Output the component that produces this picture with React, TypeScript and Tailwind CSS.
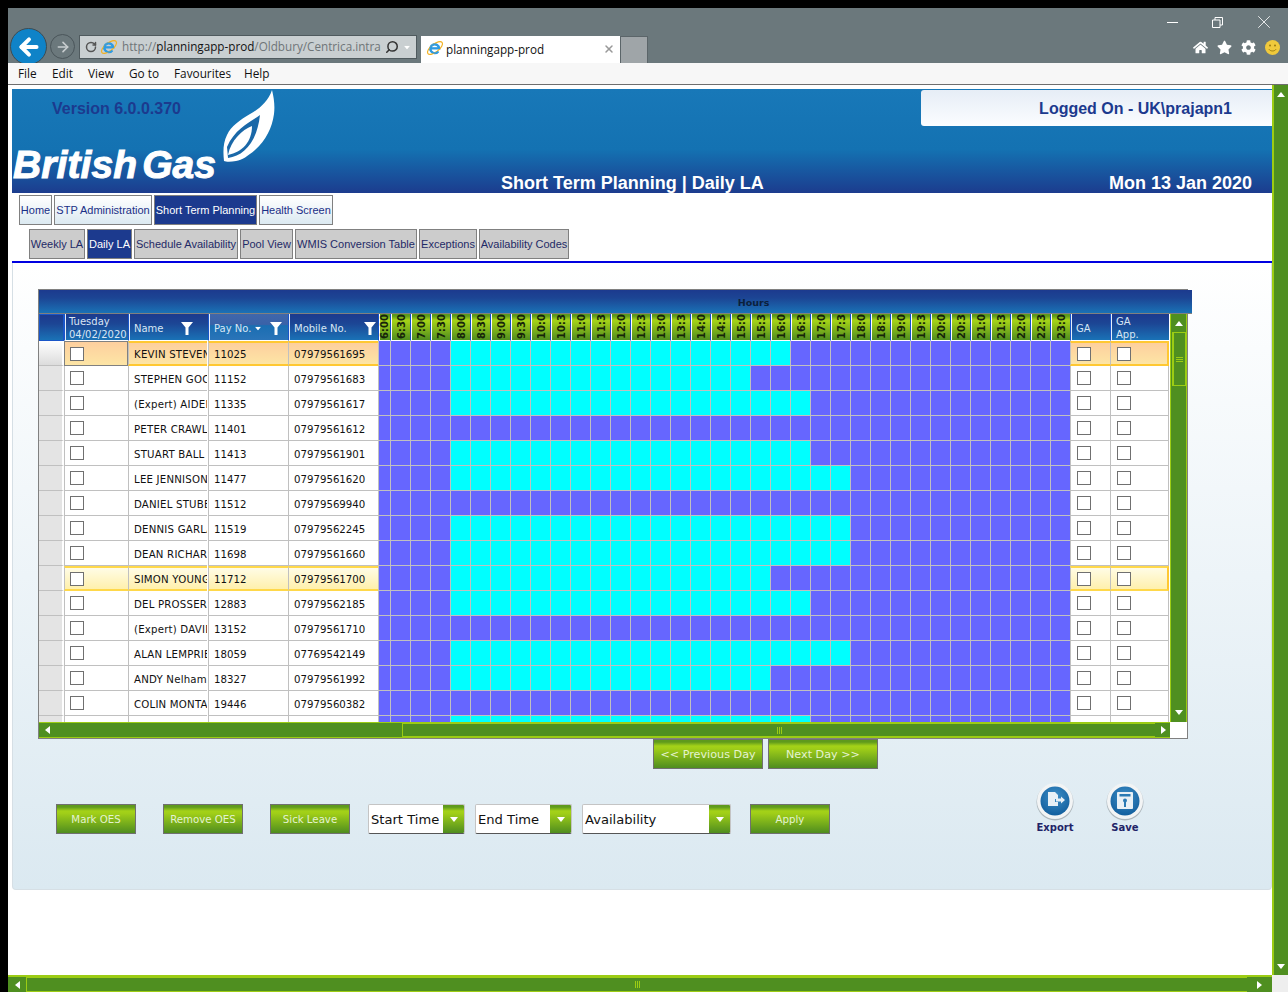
import React from "react";
import { ArrowLeft, ArrowRight, RotateCw, Search, X } from "lucide-react";
import { FaHome, FaStar, FaCog } from "react-icons/fa";

const GREEN = "bg-[linear-gradient(#5f9a1c_0,#5f9a1c_2px,#a4d218_6px,#a0ce18_30%,#4f8d1f_100%)]";
const BLUE_HEAD = "bg-[linear-gradient(#1c3a8e_0,#1c4594_35%,#1a72b6_100%)]";

const rows: [string, string, string, number][] = [
  ["KEVIN STEVENS", "11025", "07979561695", 790],
  ["STEPHEN GOCH", "11152", "07979561683", 750],
  ["(Expert) AIDEN HALL", "11335", "07979561617", 810],
  ["PETER CRAWLEY", "11401", "07979561612", 0],
  ["STUART BALL", "11413", "07979561901", 810],
  ["LEE JENNISON", "11477", "07979561620", 850],
  ["DANIEL STUBBS", "11512", "07979569940", 0],
  ["DENNIS GARLAND", "11519", "07979562245", 850],
  ["DEAN RICHARDS", "11698", "07979561660", 850],
  ["SIMON YOUNG", "11712", "07979561700", 770],
  ["DEL PROSSER", "12883", "07979562185", 810],
  ["(Expert) DAVID HILL", "13152", "07979561710", 0],
  ["ALAN LEMPRIERE", "18059", "07769542149", 850],
  ["ANDY Nelhams", "18327", "07979561992", 770],
  ["COLIN MONTAGUE", "19446", "07979560382", 0],
  ["", "", "", 810],
];

const hours: string[] = [];
for (let h = 6; h <= 23; h++) {
  hours.push(`${h}:00`);
  if (h < 23) hours.push(`${h}:30`);
}

const COLS = "grid grid-cols-[25px_64px_80px_80px_90px_12px_repeat(34,20px)_40px_59px]";

function Tri({ dir, className = "" }: { dir: "up" | "down" | "left" | "right"; className?: string }) {
  const pts = { up: "0,5 4,0 8,5", down: "0,0 8,0 4,5", left: "5,0 5,8 0,4", right: "0,0 0,8 5,4" }[dir];
  const w = dir === "up" || dir === "down" ? 8 : 5;
  const h = dir === "up" || dir === "down" ? 5 : 8;
  return (
    <svg width={w} height={h} viewBox={`0 0 ${w} ${h}`} className={className}>
      <polygon points={pts} fill="#fff" />
    </svg>
  );
}

function IE({ size = 18 }: { size?: number }) {
  return (
    <svg width={size} height={size} viewBox="0 0 20 20" className="shrink-0">
      <path d="M5.2 10.4H14.6A4.9 4.9 0 1 0 13.6 13.8" fill="none" stroke="#2f9be2" strokeWidth="2.7" />
      <ellipse cx="10" cy="10" rx="10" ry="4.4" transform="rotate(-38 10 10)" fill="none" stroke="#f2b01e" strokeWidth="1.3" />
      <path d="M5.2 10.4H14.6A4.9 4.9 0 1 0 13.6 13.8" fill="none" stroke="#2f9be2" strokeWidth="1.6" />
    </svg>
  );
}

function Funnel() {
  return (
    <svg width="12" height="13" viewBox="0 0 12 13" className="shrink-0">
      <polygon points="0,0 12,0 7.5,5.5 7.5,13 4.5,13 4.5,5.5" fill="#fff" />
    </svg>
  );
}

function Check() {
  return <span className="block w-[14px] h-[14px] border border-[#707070] bg-white shrink-0" />;
}

function GreenBtn({ label, w, size = "text-[10.2px]" }: { label: string; w: string; size?: string }) {
  return (
    <div className={`${w} ${size} ${GREEN} h-[30px] shrink-0 border border-[#707070] pt-[2px] flex items-center justify-center text-[#e4f3d0] font-['DejaVu_Sans',sans-serif]`}>
      {label}
    </div>
  );
}

function Combo({ label, w }: { label: string; w: string }) {
  return (
    <div className={`${w} h-[30px] shrink-0 flex rounded-[2px] border border-[#c4c4c4] border-b-[#555] overflow-hidden bg-white`}>
      <div className="flex-1 pl-[2px] pt-[2px] flex items-center text-[13.1px] text-[#111] font-['DejaVu_Sans',sans-serif] whitespace-nowrap">{label}</div>
      <div className={`w-[21px] ${GREEN} flex items-center justify-center`}>
        <Tri dir="down" />
      </div>
    </div>
  );
}

function RoundIcon({ label, kind }: { label: string; kind: "export" | "save" }) {
  return (
    <div className="flex flex-col items-center w-[70px] -mt-[1px]">
      <svg width="40" height="40" viewBox="0 0 40 40">
        <defs>
          <radialGradient id={`g${kind}`} cx="50%" cy="35%" r="65%">
            <stop offset="0" stopColor="#3f90c8" />
            <stop offset="1" stopColor="#135f9e" />
          </radialGradient>
        </defs>
        <circle cx="20" cy="21" r="18.5" fill="#8b9297" opacity="0.6" />
        <circle cx="20" cy="20" r="18" fill="#f2f4f5" />
        <circle cx="20" cy="20" r="14.5" fill={`url(#g${kind})`} />
        {kind === "export" ? (
          <>
            <path d="M13 11h7l3 3v4h-3v3h3v4H13z" fill="#e8f0f6" />
            <path d="M21 17.5h5v-2l4 3.5-4 3.5v-2h-5z" fill="#e8f0f6" />
          </>
        ) : (
          <>
            <rect x="12" y="11" width="16" height="17" rx="1" fill="#e8f0f6" />
            <rect x="14.5" y="13" width="11" height="2.5" fill="#2a7ab4" />
            <circle cx="20" cy="19.5" r="2" fill="#2a7ab4" />
            <rect x="19" y="20" width="2" height="6" fill="#2a7ab4" />
          </>
        )}
      </svg>
      <span className="text-[10px] font-bold leading-[13px] text-[#1f2468] font-['DejaVu_Sans',sans-serif]">{label}</span>
    </div>
  );
}

function Chrome() {
  const font = "font-['Open_Sans',sans-serif]";
  return (
    <div className="h-[55px] bg-[#6b787c] flex overflow-hidden">
      <div className="flex items-start pt-[20px] pl-[2px]">
        <div className="w-[37px] h-[37px] rounded-full bg-[#0f83c8] border border-[#3f4b50] flex items-center justify-center shrink-0">
          <ArrowLeft size={26} strokeWidth={3.6} color="#fff" />
        </div>
        <div className="ml-[3px] mt-[6px] w-[25px] h-[25px] rounded-full border border-[#4a555a] flex items-center justify-center shrink-0">
          <ArrowRight size={16} strokeWidth={2.4} color="#c8cdcf" />
        </div>
        <div className="ml-[4px] mt-[7px] w-[338px] h-[24px] bg-[#c9cfd1] border border-[#4f5a5e] flex items-center pl-[5px] pr-[4px] shrink-0">
          <RotateCw size={12} strokeWidth={3} color="#555" className="shrink-0" />
          <span className="ml-[3px]"><IE size={18} /></span>
          <span className={`ml-[4px] w-[259px] shrink-0 overflow-hidden whitespace-nowrap text-[11.7px] text-[#6f7578] ${font}`}>
            http://<span className="text-[#111]">planningapp-prod</span>/Oldbury/Centrica.intranet/default.aspx
          </span>
          <Search size={14} strokeWidth={2.6} color="#333" className="-scale-x-100 ml-[4px] shrink-0" />
          <Tri dir="down" className="ml-[4px] scale-75" />
        </div>
        <div className="ml-[4px] mt-[8px] w-[199px] h-[35px] bg-white flex items-start pt-[3px] pl-[5px] shrink-0">
          <IE size={18} />
          <span className={`ml-[2px] text-[11.7px] leading-[20px] text-[#111] ${font}`}>planningapp-prod</span>
          <X size={12} strokeWidth={3} color="#999" className="ml-auto mr-[5px] mt-[4px]" />
        </div>
        <div className="mt-[8px] w-[28px] h-[35px] bg-[#9fa5a8] border border-[#5b6569] shrink-0" />
      </div>
      <div className="ml-auto w-[130px] shrink-0 flex flex-col items-end pr-[8px] pt-[8px]">
        <div className="flex items-center h-[12px] pr-[5px]">
          <span className="block w-[11px] h-px bg-white" />
          <svg width="11" height="11" viewBox="0 0 11 11" className="ml-[34px]">
            <path d="M.5 3h7.5v7.5H.5z M3 3V.5h7.5V8H8" fill="none" stroke="#fff" />
          </svg>
          <X size={22} strokeWidth={0.9} color="#fff" className="ml-[30px]" />
        </div>
        <div className="flex items-center gap-[9px] mt-[12px]">
          <FaHome size={15} color="#fff" />
          <FaStar size={15} color="#fff" />
          <FaCog size={15} color="#fff" />
          <svg width="15" height="15" viewBox="0 0 15 15">
            <circle cx="7.5" cy="7.5" r="7.5" fill="#f0c93c" />
            <circle cx="5" cy="5.5" r="1" fill="#9a7a10" />
            <circle cx="10" cy="5.5" r="1" fill="#9a7a10" />
            <path d="M4 9.3c1.5 2.2 5.5 2.2 7 0" fill="none" stroke="#9a7a10" strokeWidth="1" />
          </svg>
        </div>
      </div>
    </div>
  );
}

function Menu() {
  const items: [string, string][] = [
    ["File", "w-[34px]"],
    ["Edit", "w-[36px]"],
    ["View", "w-[41px]"],
    ["Go to", "w-[45px]"],
    ["Favourites", "w-[70px]"],
    ["Help", "w-[40px]"],
  ];
  return (
    <div className="h-[22px] bg-[#f7f7f7] border-b border-[#6e6e6e] flex items-center pl-[10px] pt-[1px] text-[11.8px] text-[#111] font-['Open_Sans',sans-serif]">
      {items.map(([t, w]) => (
        <span key={t} className={w}>{t}</span>
      ))}
    </div>
  );
}

function Header() {
  return (
    <div className="h-[104px] flex bg-[linear-gradient(#1878b8_0,#1472b2_58%,#1c3c8e_100%)] font-['Liberation_Sans',sans-serif]">
      <div className="w-[210px] shrink-0 overflow-visible">
        <div className="pl-[40px] pt-[11px] text-[16px] leading-[18px] font-bold text-[#1c3a8e]">Version 6.0.0.370</div>
        <div className="mt-[27px] pl-[1px] text-[39px] leading-[40px] font-bold italic text-white tracking-[0.1px] [word-spacing:-6px] [-webkit-text-stroke:1px_#fff] whitespace-nowrap">British Gas</div>
      </div>
      <svg width="53" height="73" viewBox="0 0 53 73" className="shrink-0 mt-[1px]">
        <path d="M50 0C52 8 53 16 52 24 50 38 44 50 33 60 26 66 20 70 14 71 9 72 4 72 2 71 1 62 1 53 5 45 9 36 18 30 28 24 37 19 46 12 50 0Z" fill="#fff" />
        <path d="M38 25C30 31 13 38 5 57L6 68C22 66 35 52 38 25Z" fill="#1a68a8" />
        <path d="M30 36C20 40 9 50 6 65 20 62 30 52 30 36Z" fill="#fff" />
      </svg>
      <div className="flex-1 flex flex-col justify-between">
        <div className="self-end mt-[1px] pt-[1px] w-[351px] h-[36px] rounded-l-[3px] bg-[linear-gradient(#e6edf6,#fbfdff)] flex items-center justify-end pr-[40px] text-[16px] font-bold text-[#1c3a8e]">
          {"Logged On - UK\\prajapn1"}
        </div>
        <div className="flex justify-between pl-[226px] pr-[20px] text-[18px] leading-[20px] font-bold text-white">
          <span>Short Term Planning | Daily LA</span>
          <span>Mon 13 Jan 2020</span>
        </div>
      </div>
    </div>
  );
}

function Tabs() {
  const top: [string, string, boolean][] = [
    ["Home", "w-[33px]", false],
    ["STP Administration", "w-[98px]", false],
    ["Short Term Planning", "w-[103px]", true],
    ["Health Screen", "w-[74px]", false],
  ];
  const sub: [string, string, boolean][] = [
    ["Weekly LA", "w-[56px]", false],
    ["Daily LA", "w-[45px]", true],
    ["Schedule Availability", "w-[104px]", false],
    ["Pool View", "w-[53px]", false],
    ["WMIS Conversion Table", "w-[122px]", false],
    ["Exceptions", "w-[58px]", false],
    ["Availability Codes", "w-[90px]", false],
  ];
  const base = "h-[30px] shrink-0 border border-[#808080] flex items-center justify-center whitespace-nowrap text-[11px] font-['Liberation_Sans',sans-serif]";
  return (
    <>
      <div className="mt-[2px] pl-[7px] flex gap-[2px]">
        {top.map(([t, w, a]) => (
          <div key={t} className={`${base} ${w} ${a ? "bg-[#1c3a8e] text-white" : "bg-[linear-gradient(#fff,#dbe9f1)] text-[#1a2f86]"}`}>{t}</div>
        ))}
      </div>
      <div className="mt-[4px] pl-[17px] flex gap-[2px]">
        {sub.map(([t, w, a]) => (
          <div key={t} className={`${base} ${w} ${a ? "bg-[#1c3a8e] text-white" : "bg-[#cccccc] text-[#1f2a66]"}`}>{t}</div>
        ))}
      </div>
      <div className="mt-[2px] h-[2px] bg-[#0000e0]" />
    </>
  );
}

function HeadCell({ children, className = "" }: { children?: React.ReactNode; className?: string }) {
  return (
    <div className={`h-[27px] border-l border-b border-l-[#1a56c8] border-b-white shadow-[inset_1px_0_0_#e6eefa] overflow-hidden flex items-center pt-[2px] text-[#d8e6f4] ${BLUE_HEAD} ${className}`}>
      {children}
    </div>
  );
}

function HeaderRow() {
  return (
    <div className={`${COLS} text-[10px] font-['DejaVu_Sans',sans-serif]`}>
      <div className={`h-[27px] border border-[#1a56c8] ${BLUE_HEAD}`} />
      <HeadCell className="leading-[13px] pl-[4px]"><span className="whitespace-nowrap">Tuesday<br />04/02/2020</span></HeadCell>
      <HeadCell className="pl-[5px]"><span className="flex-1">Name</span><span className="pr-[15px]"><Funnel /></span></HeadCell>
      <HeadCell className="pl-[5px] bg-[linear-gradient(#3f67ab_0,#3a62a8_40%,#1a6eb2_45%,#2a74b8_100%)]">
        <span>Pay No.</span><Tri dir="down" className="ml-[3px] scale-75" /><span className="ml-auto pr-[6px]"><Funnel /></span>
      </HeadCell>
      <HeadCell className="pl-[5px]"><span className="flex-1 whitespace-nowrap">Mobile No.</span><span className="pr-[2px]"><Funnel /></span></HeadCell>
      {hours.map((h, k) => (
        <div key={h} className={`h-[27px] border-l border-b border-l-[#1450c8] border-b-white shadow-[inset_1px_0_0_#fff] overflow-hidden flex justify-center items-start ${k === 0 ? "" : "pl-[3px]"} ${GREEN}`}>
          <span className="h-[26px] overflow-hidden pt-[1px] [writing-mode:vertical-rl] rotate-180 text-[10px] leading-[12px] font-bold text-[#16240a] whitespace-nowrap">{h}</span>
        </div>
      ))}
      <HeadCell className="pl-[5px]">GA</HeadCell>
      <HeadCell className="pl-[5px] leading-[13px]"><span>GA<br />App.</span></HeadCell>
    </div>
  );
}

function Row({ r, i }: { r: [string, string, string, number]; i: number }) {
  const sel = i === 0;
  const hov = i === 9;
  const hl = sel
    ? "bg-[linear-gradient(#fdcf9e,#fde5a5)] border-y-2 border-y-[#ffc832]"
    : hov
    ? "bg-[linear-gradient(#fffce6,#fff0ac)] border-y-2 border-y-[#ffd84a]"
    : "bg-white border-b border-[#c0c0c0]";
  const lined = "h-[25px]";
  return (
    <div className={`${COLS} text-[10.2px] text-[#111] font-['DejaVu_Sans',sans-serif]`}>
      <div className={`${lined} border-b border-[#c0c0c0] border-r-2 border-r-white ${sel ? "bg-[linear-gradient(#fff,#dcdcdc)]" : "bg-[#e4e4e4]"}`} />
      <div className={`${lined} ${sel ? "border border-[#808080] bg-[linear-gradient(#fdcf9e,#fde5a5)]" : hl + " border-l border-l-[#c0c0c0]"} flex items-center pl-[5px]`}>
        {r[2] && <Check />}
      </div>
      {[r[0], r[1], r[2]].map((t, k) => (
        <div key={k} className={`${lined} ${hl} border-l border-l-[#c0c0c0] flex items-center pl-[5px] overflow-hidden whitespace-nowrap ${sel || hov ? "pt-[2px]" : "pt-[4px]"} ${k === 0 ? "tracking-[0.2px] mr-px" : ""}`}>
          {t}
        </div>
      ))}
      {hours.map((_, k) => {
        const x = k === 0 ? 378 : 390 + (k - 1) * 20;
        const on = r[3] > 0 && x >= 450 && x < r[3];
        return <div key={k} className={`${lined} border-b border-b-[#c0c0c0] border-l border-l-[#c0c0c0] ${on ? "bg-[#00ffff]" : "bg-[#6666ff]"}`} />;
      })}
      <div className={`${lined} ${hl} border-l border-l-[#c0c0c0] flex items-center pl-[6px]`}>{r[2] && <Check />}</div>
      <div className={`${lined} ${hl} border-l border-l-[#c0c0c0] flex items-center pl-[6px] ${sel || hov ? "border-r-2 border-r-[#ffc832]" : "border-r border-r-[#c0c0c0]"}`}>{r[2] && <Check />}</div>
    </div>
  );
}

function PlanGrid() {
  return (
    <div className="ml-[25px] w-[1150px] h-[450px] border border-[#808080] bg-white flex flex-col">
      <div className={`w-[1153px] h-[24px] shrink-0 border-b border-[#808080] flex items-center justify-center pl-[276px] pt-[3px] text-[9.5px] font-bold text-[#0b1f3c] font-['DejaVu_Sans',sans-serif] ${BLUE_HEAD}`}>
        Hours
      </div>
      <div className="flex-1 flex min-h-0">
        <div className="w-[1131px] shrink-0 flex flex-col overflow-hidden">
          <HeaderRow />
          <div className="flex-1 overflow-hidden min-h-0">
            {rows.map((r, i) => (
              <Row key={i} r={r} i={i} />
            ))}
          </div>
          <div className="h-[16px] shrink-0 bg-[#4f8f20] border-y border-[#9ccc14] flex items-stretch">
            <div className="w-[363px] shrink-0 flex items-center pl-[6px]">
              <Tri dir="left" />
            </div>
            <div className="flex-1 border-l border-y border-[#9ccc14] flex items-center justify-center">
              <span className="w-[5px] h-[7px] border-x border-[#9ccc14] flex justify-center">
                <span className="block w-px h-full bg-[#9ccc14]" />
              </span>
            </div>
            <div className="w-[15px] shrink-0 flex items-center justify-end pr-[4px]">
              <Tri dir="right" />
            </div>
          </div>
        </div>
        <div className="flex-1 flex flex-col">
          <div className="h-[408px] bg-[#4f8f20] border-x border-[#9ccc14] flex flex-col items-center">
            <Tri dir="up" className="mt-[7px]" />
            <div className="mt-[6px] w-[14px] h-[54px] border border-[#9ccc14] border-l-2 flex flex-col items-center justify-center gap-[1px]">
              <span className="block w-[7px] h-px bg-[#9ccc14]" />
              <span className="block w-[7px] h-px bg-[#9ccc14]" />
              <span className="block w-[7px] h-px bg-[#9ccc14]" />
            </div>
            <Tri dir="down" className="mt-auto mb-[7px]" />
          </div>
        </div>
      </div>
    </div>
  );
}

function Panel() {
  return (
    <div className="h-[627px] pt-[26px] rounded-b-[4px] border-b border-x border-[#d6dfe5] bg-[linear-gradient(#ffffff,#dbe9f1)]">
      <PlanGrid />
      <div className="pl-[640px] flex gap-[5px]">
        <GreenBtn label="<< Previous Day" w="w-[110px]" size="text-[11.2px]" />
        <GreenBtn label="Next Day >>" w="w-[110px]" size="text-[11.2px]" />
      </div>
      <div className="mt-[13px] pl-[43px] flex items-end h-[52px]">
        <GreenBtn label="Mark OES" w="w-[80px]" />
        <div className="ml-[27px]"><GreenBtn label="Remove OES" w="w-[80px]" /></div>
        <div className="ml-[27px]"><GreenBtn label="Sick Leave" w="w-[80px]" /></div>
        <div className="ml-[18px]"><Combo label="Start Time" w="w-[97px]" /></div>
        <div className="ml-[10px]"><Combo label="End Time" w="w-[97px]" /></div>
        <div className="ml-[10px]"><Combo label="Availability" w="w-[149px]" /></div>
        <div className="ml-[19px]"><GreenBtn label="Apply" w="w-[80px]" /></div>
        <div className="ml-[190px] self-start flex">
          <RoundIcon label="Export" kind="export" />
          <RoundIcon label="Save" kind="save" />
        </div>
      </div>
    </div>
  );
}

export default function App() {
  return (
    <div className="w-[1288px] h-[992px] bg-black pt-[8px] pl-[8px] flex flex-col overflow-hidden">
      <Chrome />
      <Menu />
      <div className="h-[890px] flex bg-white">
        <div className="w-[1264px] shrink-0 pl-[4px] pt-[4px]">
          <Header />
          <Tabs />
          <Panel />
        </div>
        <div className="flex-1 bg-[#4f8f20] border-l-2 border-[#9ccc14] flex flex-col items-center">
          <Tri dir="up" className="mt-[7px]" />
          <Tri dir="down" className="mt-auto mb-[6px]" />
        </div>
      </div>
      <div className="h-[17px] flex bg-white">
        <div className="w-[1264px] shrink-0 bg-[#4f8f20] border-t-2 border-[#9ccc14] flex items-stretch">
          <div className="w-[19px] shrink-0 flex items-center justify-center border-r border-[#9ccc14]">
            <Tri dir="left" />
          </div>
          <div className="flex-1 border-y border-[#9ccc14] flex items-center justify-center">
            <span className="w-[5px] h-[7px] border-x border-[#9ccc14] flex justify-center">
              <span className="block w-px h-full bg-[#9ccc14]" />
            </span>
          </div>
          <div className="w-[25px] shrink-0 flex items-center justify-center">
            <Tri dir="right" />
          </div>
        </div>
        <div className="flex-1 bg-[#eeeeee]" />
      </div>
    </div>
  );
}
